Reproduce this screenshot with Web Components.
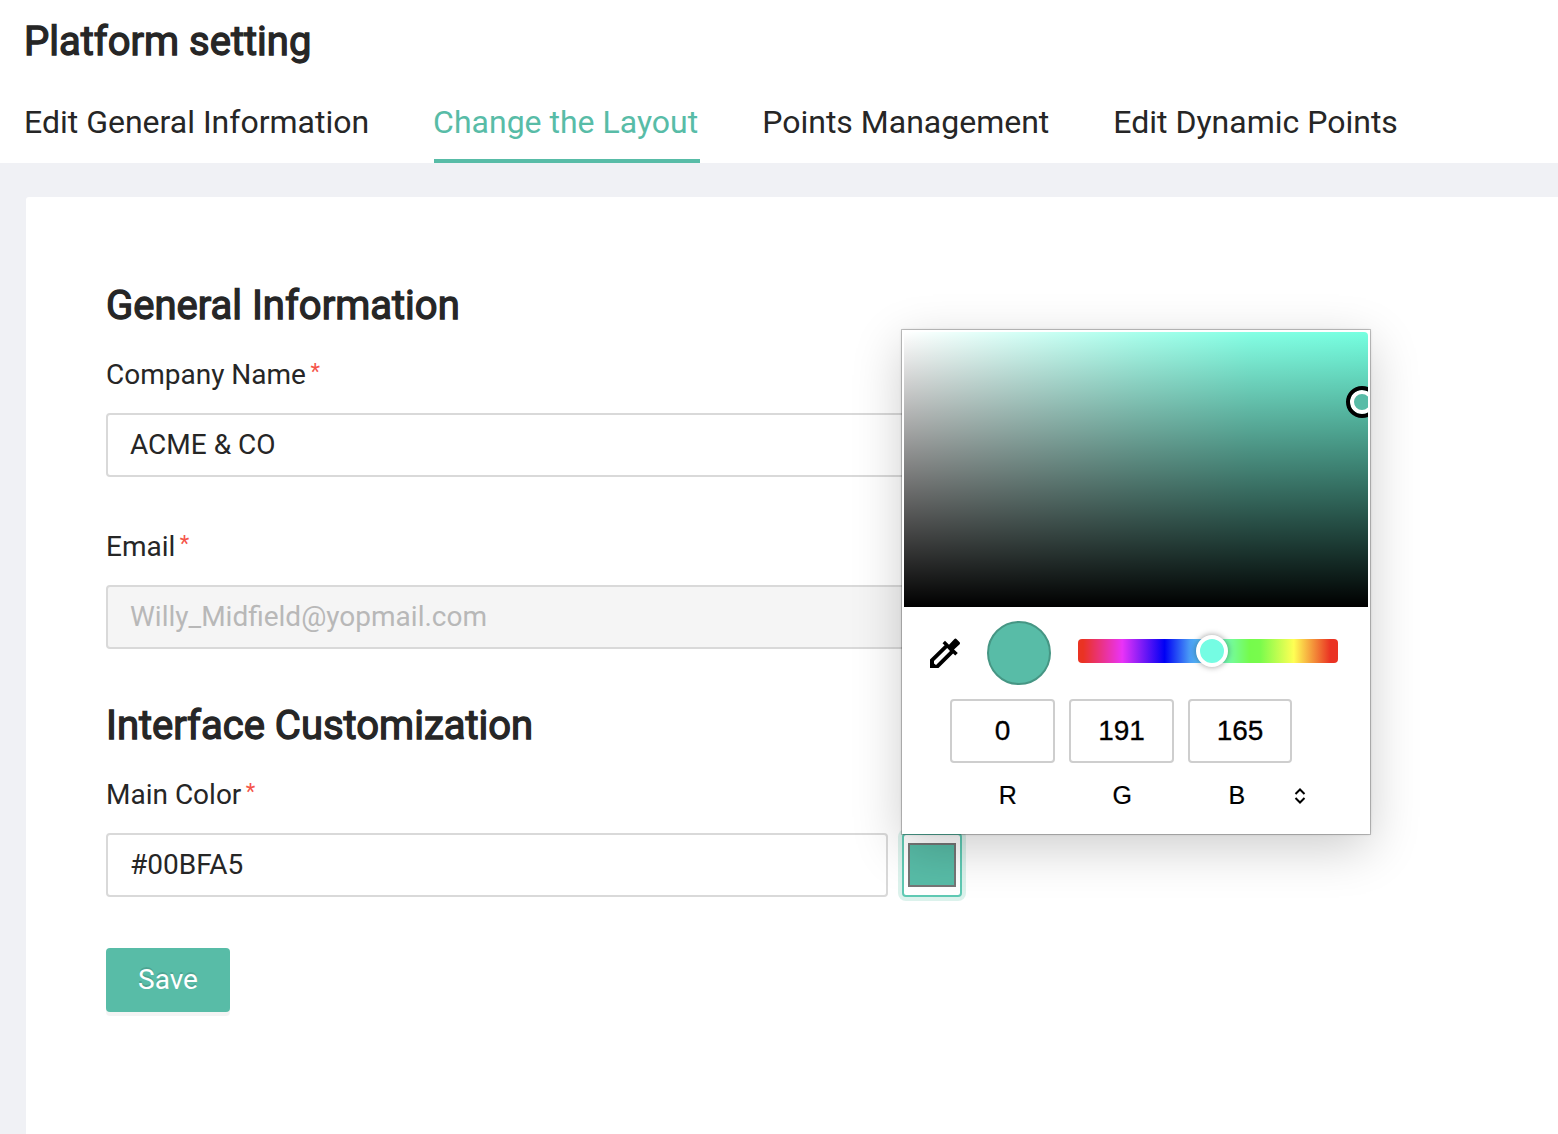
<!DOCTYPE html>
<html lang="en">
<head>
<meta charset="utf-8">
<title>Platform setting</title>
<style>
html,body{margin:0;height:100%;overflow:hidden;background:#fff}
body{font-family:Roboto,"Liberation Sans",sans-serif;color:#262626;font-size:28px;--main:#58bca7}
</style>
</head>
<body>
<settings-page>
  <page-header slot="header" heading="Platform setting">
    <page-tab>Edit General Information</page-tab>
    <page-tab active>Change the Layout</page-tab>
    <page-tab>Points Management</page-tab>
    <page-tab>Edit Dynamic Points</page-tab>
  </page-header>
  <section-title>General Information</section-title>
  <form-field label="Company Name"><text-input>ACME &amp; CO</text-input></form-field>
  <form-field label="Email"><text-input disabled>Willy_Midfield@yopmail.com</text-input></form-field>
  <section-title class="second">Interface Customization</section-title>
  <form-field label="Main Color"><text-input short>#00BFA5</text-input><color-swatch><color-picker></color-picker></color-swatch></form-field>
  <save-button>Save</save-button>
</settings-page>
<script>
function define(name, html, setup){
  customElements.define(name, class extends HTMLElement{
    connectedCallback(){
      if(this.shadowRoot) return;
      const root=this.attachShadow({mode:'open'});
      const t=document.createElement('template');
      t.innerHTML=html;
      root.append(t.content.cloneNode(true));
      if(setup) setup(this,root);
    }
  });
}
define('settings-page',`<style>
:host{display:flex;flex-direction:column;height:100vh;background:#f0f1f5;width:100%;overflow:hidden}
main{flex:1;margin:34px 0 0 26px;background:#fff;border-radius:3px 0 0 0;padding:80px;box-sizing:border-box;display:flex;flex-direction:column;align-items:flex-start}
</style><slot name="header"></slot><main><slot></slot></main>`);
define('page-header',`<style>
:host{display:flex;flex-direction:column;background:#fff;height:163px;flex:none;box-sizing:border-box;padding:18px 24px 0}
h1{margin:0;font-size:40px;line-height:48px;font-weight:400;-webkit-text-stroke:1.3px #262626}
nav{display:flex;gap:64px;margin-top:15px;height:82px}
</style><h1></h1><nav><slot></slot></nav>`,(h,r)=>{r.querySelector('h1').textContent=h.getAttribute('heading')});
define('page-tab',`<style>
:host{display:flex;flex-direction:column;justify-content:space-between;box-sizing:border-box;height:82px;padding-top:21px;font-size:32px;line-height:40px;white-space:nowrap}
:host([active]){color:var(--main)}
:host([active])::after{content:"";height:4px;background:var(--main);margin:0 -2px 0 1px}
</style><span><slot></slot></span>`);
define('section-title',`<style>
:host{display:block;box-sizing:border-box;font-size:40px;line-height:56px;height:56px;padding-top:1px;-webkit-text-stroke:1.3px #262626;white-space:nowrap}
:host(.second){margin-top:20px}
</style><slot></slot>`);
define('form-field',`<style>
:host{display:block;width:856px;height:172px;flex:none}
label{display:flex;height:80px;box-sizing:border-box;padding-top:20px;line-height:44px;gap:4.5px}
sup{font-size:22px;line-height:38px;color:#f5554a;vertical-align:baseline}
div{display:flex;gap:14px}
</style><label><span></span><sup>*</sup></label><div><slot></slot></div>`,(h,r)=>{r.querySelector('span').textContent=h.getAttribute('label')});
define('text-input',`<style>
:host{display:block;box-sizing:border-box;width:100%;height:64px;border:2px solid #d9d9d9;border-radius:4px;background:#fff;padding:0 22px;line-height:60px}
:host([short]){width:782px}
:host([disabled]){background:#f5f5f5;color:#b8b8b8}
</style><slot></slot>`);
define('color-swatch',`<style>
:host{display:block;position:relative;box-sizing:border-box;width:60px;height:64px;padding:8px 4px;border:2px solid #5fc9b3;border-radius:4px;background:#fff;box-shadow:0 0 0 4px #dcf2ec}
i{display:block;box-sizing:border-box;width:48px;height:44px;border:2px solid #767676;background:var(--main)}
</style><i></i><slot></slot>`);
define('color-picker',`<style>
:host{position:absolute;left:-2px;bottom:61px;width:468px;height:504px;box-sizing:border-box;background:#fff;color:#000;box-shadow:0 0 0 1px rgba(0,0,0,.2),0 0 3px rgba(0,0,0,.2),0 14px 48px rgba(0,0,0,.2);padding:2px;font-family:"Liberation Sans",sans-serif;line-height:normal;display:flex;flex-direction:column}
.area{position:relative;height:275px;flex:none;overflow:hidden;border-top-right-radius:4px;background:linear-gradient(to bottom,transparent,#000),linear-gradient(to right,#fff,#d4fff6 25%,#a9ffec 50%,#84ffe4 75%,#75ffe0)}
.ring{position:absolute;left:442px;top:54px;width:16px;height:16px;border:4px solid #fff;outline:4px solid #000;border-radius:50%;background:var(--main);margin:4px;}
.tools{display:flex;align-items:center;height:92px}
.tools svg{margin:-1px 0 0 26px;width:30px;height:30px}
.dot{box-sizing:border-box;width:64px;height:64px;border-radius:50%;border:2px solid #469684;background:var(--main);margin-left:27px}
.hue{position:relative;width:260px;height:24px;margin:-4px 0 0 27px;border-radius:4px;background:linear-gradient(to right,#ea3323 2%,#ea33f7 17%,#0000f5 33.3%,#4a9cf5 43%,#59c0fa 47%,#75fbfd 50%,#75fb4c 66%,#79fb4c 70%,#ffff54 83%,#ea3323 97%)}
.thumb{position:absolute;box-sizing:border-box;left:118px;top:-4px;width:32px;height:32px;border:4px solid #fff;border-radius:50%;background:#75fce3;box-shadow:0 0 6px rgba(0,0,0,.4)}
.nums{display:flex;gap:14px;padding-left:46px}
.nums span{box-sizing:border-box;width:105px;height:64px;border:2px solid #cecece;border-radius:4px;text-align:center;line-height:59px;font-size:28px;-webkit-text-stroke:.3px #000}
.nums span:last-child{width:104px}
.labs{display:flex;margin-top:18px;padding-left:46.5px;align-items:center;font-size:25px;line-height:29px}
.labs span{width:114.5px;text-align:center;-webkit-text-stroke:.2px #000}
.labs svg{width:12px;height:16px;margin-left:-.5px}
</style><div class="area"><div class="ring"></div></div>
<div class="tools"><svg viewBox="0 0 30 30"><path fill-rule="evenodd" d="M0 30v-8.500L14.600 7.200 12.500 5.200 15 2.700l4 4L24.200 1.200q1.200-1.400 2.500 0l2.700 2.700q1.200 1.200 0 2.600L24 11.400l3.800 3.600-2.500 2.500-2.200-2.100L8.500 30zM4 25.600L6 27 20 13 17.200 9.900 4 23z"/></svg><div class="dot"></div><div class="hue"><div class="thumb"></div></div></div>
<div class="nums"><span>0</span><span>191</span><span>165</span></div>
<div class="labs"><span>R</span><span>G</span><span>B</span><svg viewBox="0 0 12 16" fill="none" stroke="#000" stroke-width="2"><path d="M1.500 6L6 1.500 10.500 6M1.500 10L6 14.500 10.500 10"/></svg></div>`);
define('save-button',`<style>
:host{display:block;width:124px;height:64px;margin-top:23px;background:var(--main);color:#fff;border-radius:4px;text-align:center;line-height:63px;box-shadow:0 4px 0 rgba(0,0,0,.045);text-shadow:0 -2px 0 rgba(0,0,0,.12)}
</style><slot></slot>`);
</script>
</body>
</html>
